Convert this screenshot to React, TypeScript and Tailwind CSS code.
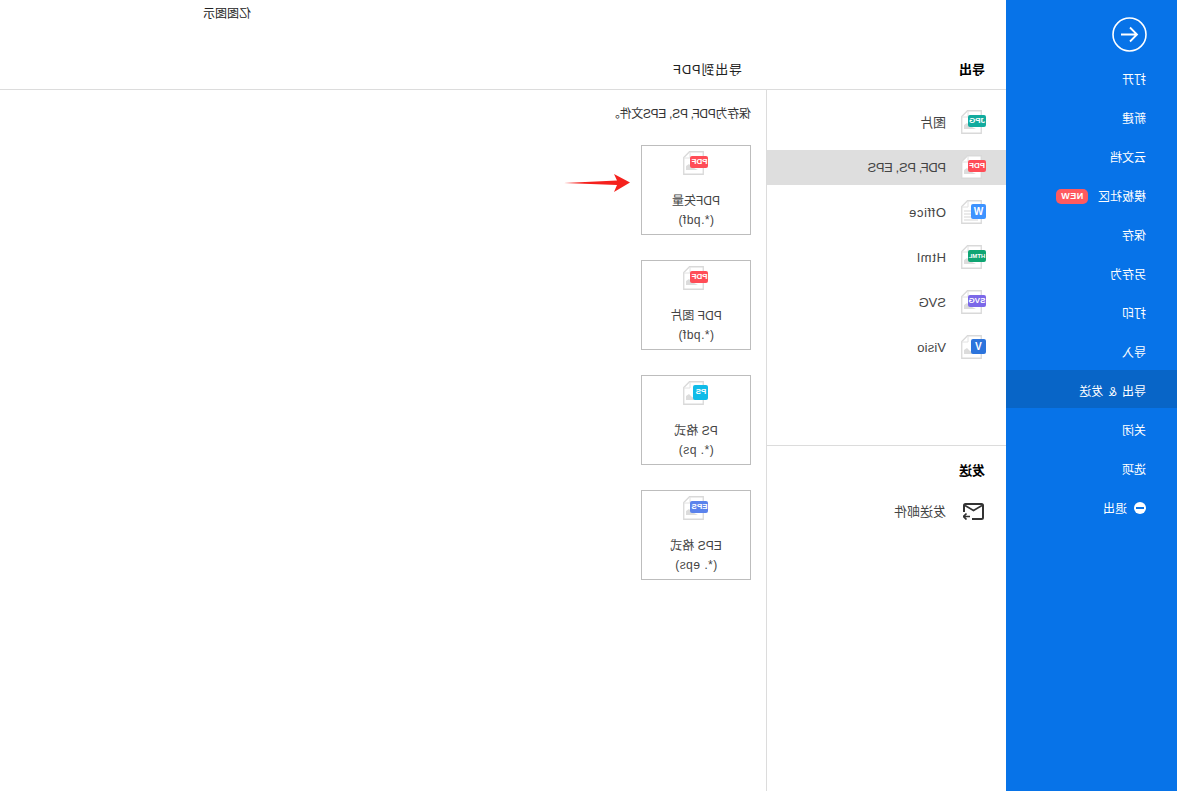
import React from "react";

const font = { fontFamily: '"Liberation Sans","Noto Sans CJK SC",sans-serif' };

const nav = ["打开", "新建", "云文档", "模板社区", "保存", "另存为", "打印", "导入", "导出 & 发送", "关闭", "选项", "退出"];

function FileIcon({ label, color, lines = false, size = "text-[8px]", square = false }: { label: string; color: string; lines?: boolean; size?: string; square?: boolean }) {
  return (
    <div className="relative h-[24px] w-[25px] shrink-0">
      <svg viewBox="0 0 21 24" className="ml-[4px] h-[24px] w-[21px]" fill="none">
        <path d="M.75.75H14.5L20.25 6.5V23.25H.75Z" stroke="#d9d9d9" strokeWidth="1.3" fill="#fff" />
        <path d="M14 1V7H20" stroke="#e2e2e2" strokeWidth="1" />
        {lines ? (
          <path d="M4 11H18M4 14H18M4 17H18M4 20H18" stroke="#d5d5d5" strokeWidth="1" />
        ) : (
          <path d="M6 19L12 16L15 13L18 15V19H13Z" fill="#dcdcdc" />
        )}
      </svg>
      <span
        className={`absolute left-0 flex items-center justify-center rounded-[2px] font-bold text-white ${square ? "top-[4px] h-[15px] w-[15px]" : "top-[5px] h-[12px] w-[18px]"} ${size}`}
        style={{ backgroundColor: color }}
      >
        {label}
      </span>
    </div>
  );
}

function FormatRow({ label, badge, color, active, lines, size, track = "", square }: { label: string; badge: string; color: string; active?: boolean; lines?: boolean; size?: string; track?: string; square?: boolean }) {
  return (
    <div className={`flex h-[35px] items-center gap-[15px] pl-[20px] text-[13px] text-[#444] ${active ? "bg-[#dedede]" : ""}`}>
      <div className="-mt-[1px]">
        <FileIcon label={badge} color={color} lines={lines} size={size} square={square} />
      </div>
      <span className={track}>{label}</span>
    </div>
  );
}

function Card({ title, ext, badge, color, square }: { title: string; ext: string; badge: string; color: string; square?: boolean }) {
  return (
    <div className="flex h-[90px] w-[110px] flex-col items-center border border-[#bdbdbd] pt-[5px] text-xs text-[#444]">
      <FileIcon label={badge} color={color} square={square} />
      <span className="mt-[17px] leading-[19px]">{title}</span>
      <span className="tracking-[0.5px] leading-[19px]">{ext}</span>
    </div>
  );
}

export default function App() {
  return (
    <div className="flex h-[791px] w-[1177px] -scale-x-100 overflow-hidden bg-white" style={font}>
      <aside className="w-[171px] shrink-0 bg-[#0773e8] text-xs text-white">
        <div className="h-[58px] pt-[17px] pl-[30px]">
          <svg viewBox="0 0 35 35" className="h-[35px] w-[35px]" fill="none" stroke="#fff">
            <circle cx="17.5" cy="17.5" r="16.5" strokeWidth="1.6" />
            <path d="M26 17.5H10M17 10.5L10 17.5L17 24.5" strokeWidth="1.8" />
          </svg>
        </div>
        <nav className="flex flex-col gap-[1px]">
          {nav.map((n) => (
            <div key={n} className={`flex h-[38px] items-center pt-[6px] pl-[31px] ${n.startsWith("导出") ? "bg-[#0865c7] [word-spacing:2px]" : ""}`}>
              {n === "退出" && (
                <span className="mr-[7px] flex h-[12px] w-[12px] -translate-y-[1px] items-center justify-center rounded-full bg-white">
                  <span className="h-[2px] w-[8px] bg-[#0773e8]" />
                </span>
              )}
              <span>{n}</span>
              {n === "模板社区" && (
                <span className="ml-[10px] flex h-[15px] w-[32px] -translate-y-[1px] items-center justify-center rounded-[5px] bg-[#ff5a5f] text-[9px] font-bold tracking-[0.5px]">
                  NEW
                </span>
              )}
            </div>
          ))}
        </nav>
      </aside>

      <main className="relative flex min-w-0 flex-1 flex-col">
        <div className="flex h-[28px] items-center pl-[755px] text-xs text-[#222]">亿图图示</div>
        <div className="flex h-[62px] items-end border-b border-[#dcdcdc] pb-[10px] text-[13px] text-black">
          <div className="w-[264px] pl-[21px] font-bold">导出</div>
          <div className="tracking-[0.8px] text-[#222]">导出到PDF</div>
        </div>
        <div className="flex flex-1">
          <section className="flex w-[240px] shrink-0 flex-col border-r border-[#dcdcdc]">
            <div className="flex h-[356px] flex-col gap-[10px] border-b border-[#dcdcdc] pt-[15px]">
              <FormatRow label="图片" badge="JPG" color="#12ab9e" />
              <FormatRow label="PDF, PS, EPS" badge="PDF" color="#ff4d57" active track="tracking-[-0.35px]" />
              <FormatRow label="Office" badge="W" color="#3d93ff" lines size="text-[10px]" track="tracking-[0.65px]" square />
              <FormatRow label="Html" badge="HTML" color="#0fa573" size="text-[6px]" track="tracking-[0.7px]" />
              <FormatRow label="SVG" badge="SVG" color="#7b68e8" />
              <FormatRow label="Visio" badge="V" color="#2c74dc" size="text-[10px]" track="tracking-[0.2px]" square />
            </div>
            <div className="pt-[15px] pl-[21px] text-[13px] font-bold text-black">发送</div>
            <div className="mt-[21px] flex items-center gap-[17px] pl-[22px] text-[13px] text-[#444]">
              <svg viewBox="0 0 21 17" className="h-[17px] w-[21px] shrink-0" fill="none" stroke="#333" strokeWidth="2">
                <path d="M12 16H2.5Q1 16 1 14.5V2.5Q1 1 2.5 1H18.5Q20 1 20 2.5V9" />
                <path d="M2 2.5L10.5 7.5L19 2.5" strokeWidth="1.6" />
                <path d="M14 13.5H20.5M17.5 10.5L20.5 13.5L17.5 16.5" strokeWidth="1.7" />
              </svg>
              <span>发送邮件</span>
            </div>
          </section>
          <section className="pt-[16px] pl-[15px]">
            <p className="text-xs leading-[16px] tracking-[-0.28px] text-[#333]">保存为PDF, PS, EPS文件。</p>
            <div className="mt-[23px] flex flex-col gap-[25px]">
              <Card title="PDF矢量" ext="(*.pdf)" badge="PDF" color="#ff4d57" />
              <Card title="PDF 图片" ext="(*.pdf)" badge="PDF" color="#ff4d57" />
              <Card title="PS 格式" ext="(*. ps)" badge="PS" color="#10bbe8" square />
              <Card title="EPS 格式" ext="(*. eps)" badge="EPS" color="#5b83ec" />
            </div>
          </section>
        </div>
        <svg viewBox="0 0 66 18" className="absolute top-[174px] left-[376px] h-[18px] w-[66px]">
          <path d="M0 8.5L16 0L13 6.5L66 9L13 11L16 18Z" fill="#f5211d" />
        </svg>
      </main>
    </div>
  );
}
